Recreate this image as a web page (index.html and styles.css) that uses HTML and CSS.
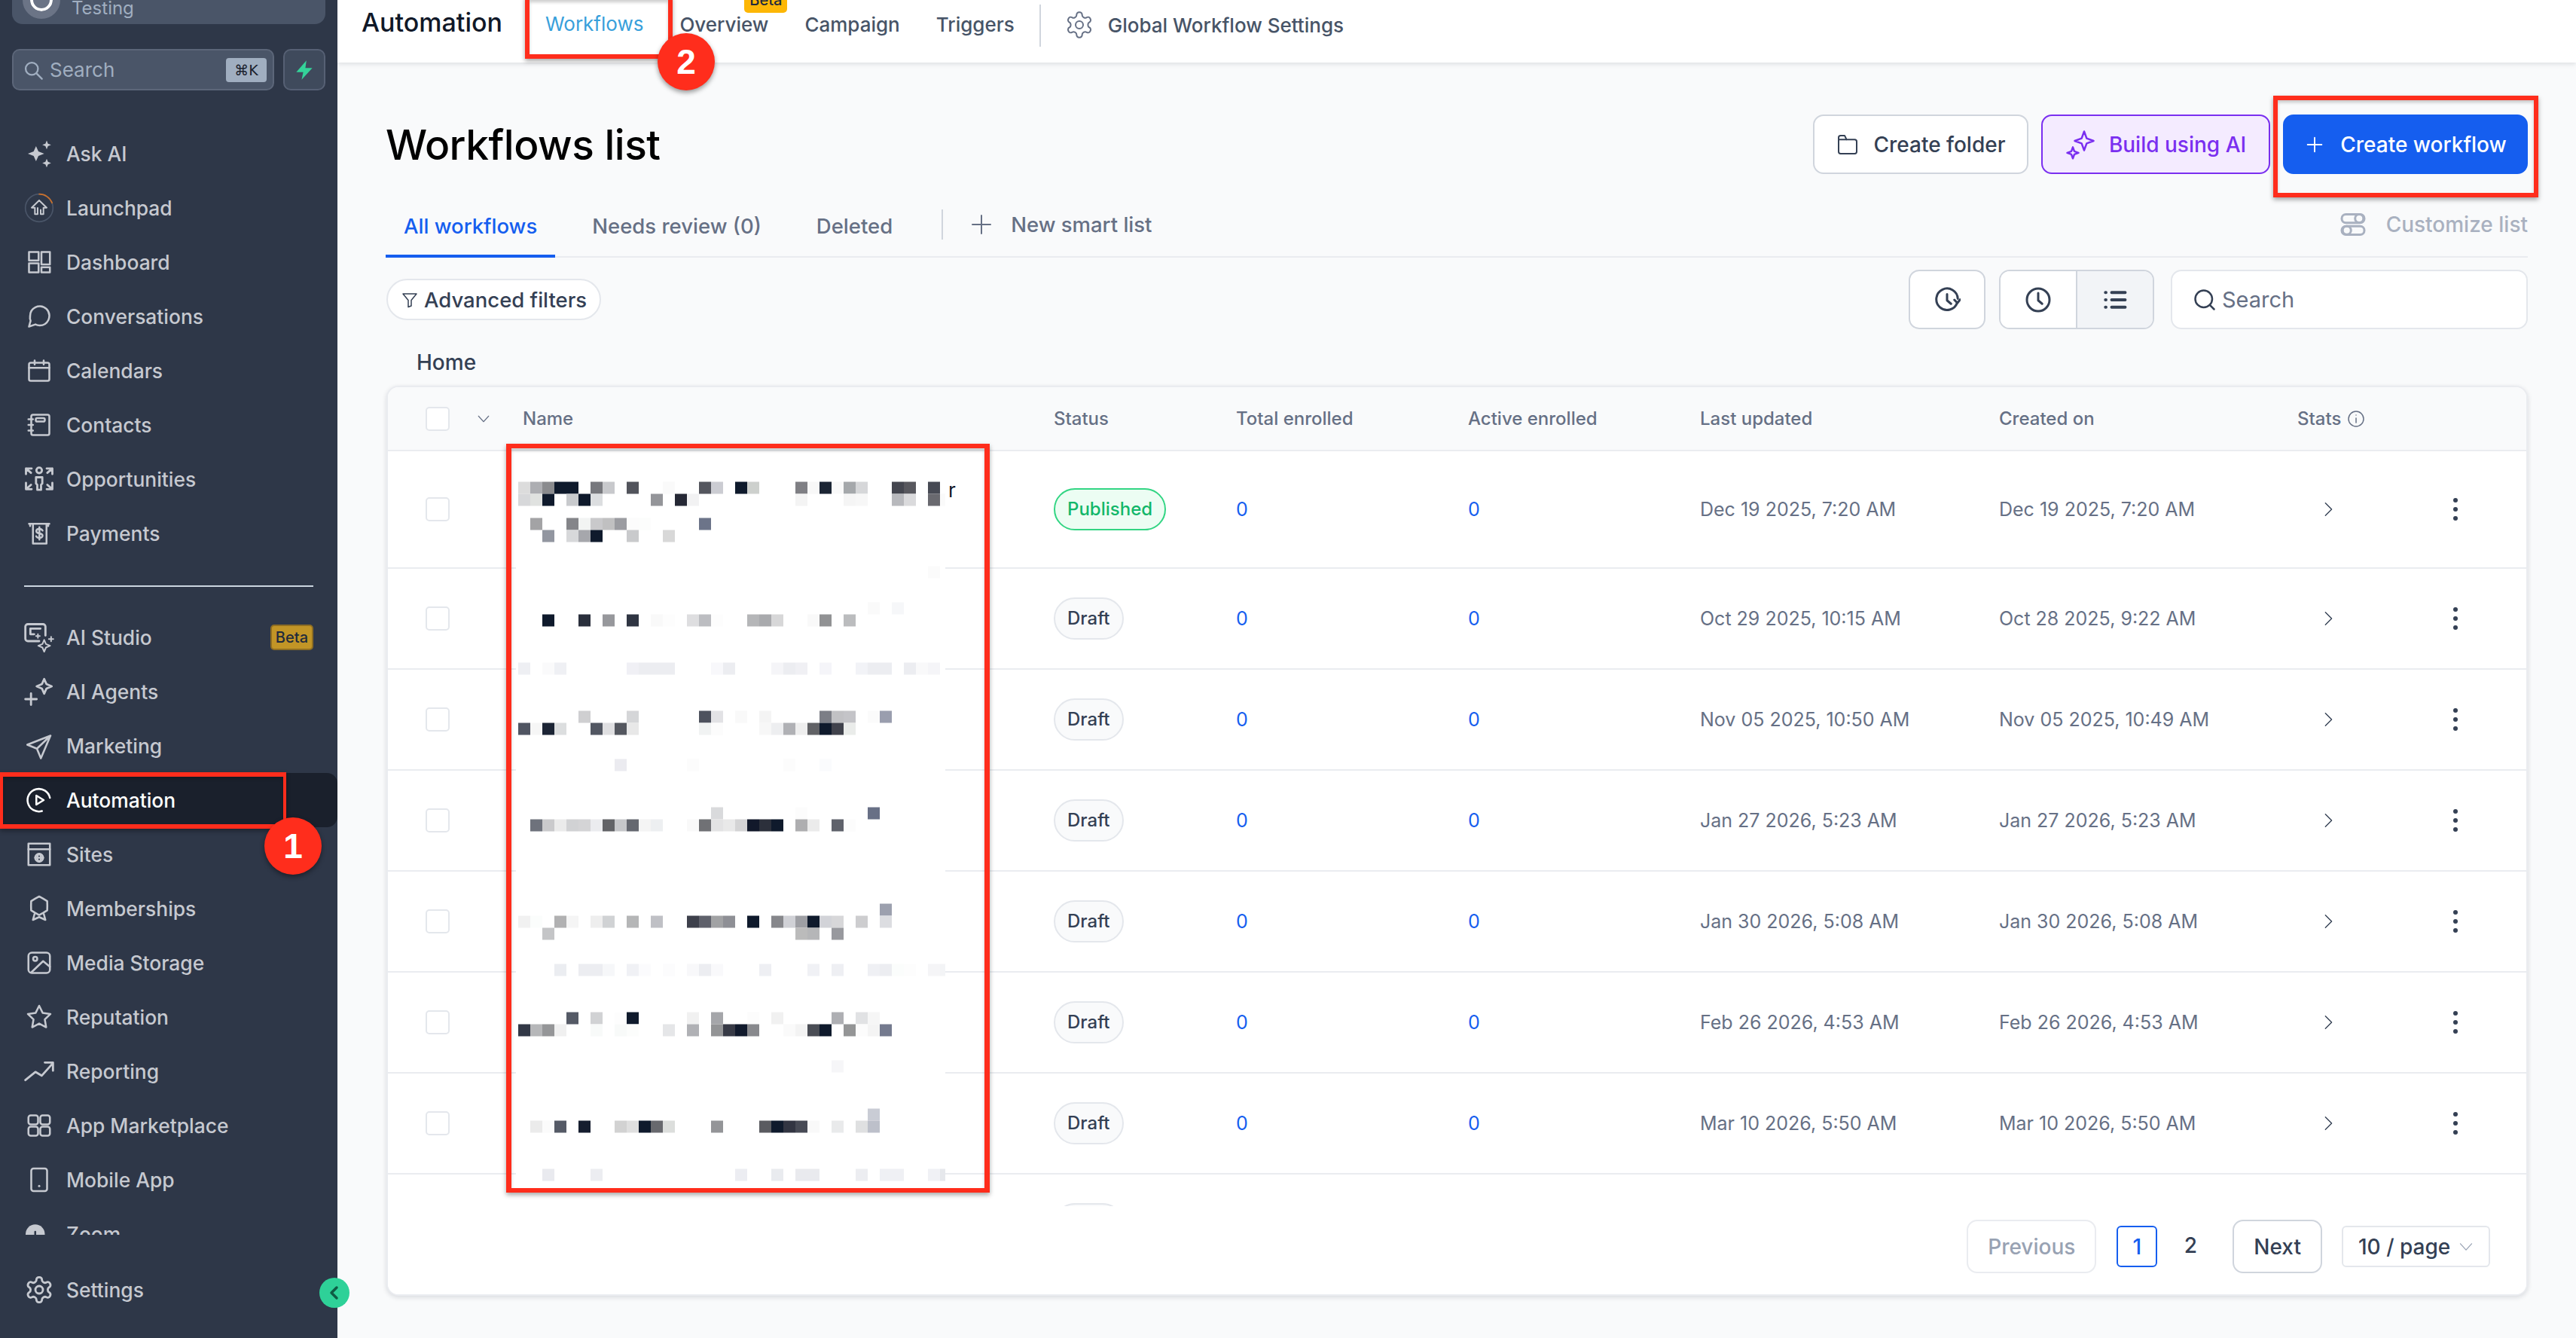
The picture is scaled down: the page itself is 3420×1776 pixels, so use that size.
FILE: index.html
```html
<!DOCTYPE html>
<html lang="en">
  <head>
    <meta charset="UTF-8" />
    <meta name="viewport" content="width=device-width, initial-scale=1.0" />
    <title>Workflows list</title>
    <link rel="stylesheet" href="styles.css">
  </head>
  <body>
    <div class="app">
      <aside class="sidebar">
        <div class="account">
          <span class="avatar"></span>
          <span class="account-name">Testing</span>
          <svg class="account-caret" viewBox="0 0 24 24"><path d="M6 -2l6 6 6-6" /></svg>
        </div>
        <div class="side-search-row">
          <div class="side-search">
            <svg class="icon-sm" viewBox="0 0 24 24"><circle cx="10.5" cy="10.5" r="7" /><path d="M16 16l6 6" /></svg>
            <span class="side-search-text">Search</span>
            <span class="kbd">⌘K</span>
          </div>
          <div class="bolt-btn">
            <svg viewBox="0 0 24 24"><path class="fill-green" d="M14 3L4.5 14H11l-1.5 7L19.5 10H13z" /></svg>
          </div>
        </div>
        <nav class="nav">
          <a class="nav-item"><svg class="icon icon-lg" viewBox="0 0 24 24"><path class="fill" d="M9.5 6l1.9 4.2 4.6 1.8-4.6 1.8L9.5 18l-1.9-4.2L3 12l4.6-1.8zM18 1.5l1 2.5 2.5 1-2.5 1-1 2.5-1-2.5-2.5-1 2.5-1zM18 16l1 2.5 2.5 1-2.5 1-1 2.5-1-2.5-2.5-1 2.5-1z" /></svg>Ask AI</a>
          <a class="nav-item"><svg class="icon icon-lg" viewBox="0 0 24 24"><circle class="ring" cx="12" cy="12" r="11" /><path class="ring-arc" d="M12 1a11 11 0 0 1 10.3 7" /><path class="thin" d="M12 6l6 5.8h-2.6V17h-2.2v-3.5M12 6l-6 5.8h2.6V17h2.2v-5" /></svg>Launchpad</a>
          <a class="nav-item"><svg class="icon" viewBox="0 0 24 24"><rect x="3" y="3" width="8.5" height="7.5" /><rect x="3" y="13" width="8.5" height="8" /><rect x="14" y="3" width="7.5" height="11" /><rect x="14" y="16.5" width="7.5" height="4.5" /></svg>Dashboard</a>
          <a class="nav-item"><svg class="icon" viewBox="0 0 24 24"><path d="M21 11.5a8.38 8.38 0 0 1-.9 3.8 8.5 8.5 0 0 1-7.6 4.7 8.38 8.38 0 0 1-3.8-.9L3 21l1.4-5.1a8.38 8.38 0 0 1-.4-4.4 8.5 8.5 0 0 1 4.7-7.6 8.38 8.38 0 0 1 3.8-.9h.5a8.48 8.48 0 0 1 8 8v.5z" /></svg>Conversations</a>
          <a class="nav-item"><svg class="icon" viewBox="0 0 24 24"><rect x="3" y="5" width="18" height="16" rx="1.5" /><path d="M3 9.5h18M8 3v3.5M16 3v3.5" /></svg>Calendars</a>
          <a class="nav-item"><svg class="icon" viewBox="0 0 24 24"><rect x="5" y="3" width="16" height="18" rx="1.5" /><rect x="9" y="6" width="8" height="3" rx="1.2" /><path d="M2.5 7h4M2.5 12h4M2.5 17h4" /></svg>Contacts</a>
          <a class="nav-item"><svg class="icon icon-lg" viewBox="0 0 24 24"><circle cx="12" cy="5" r="2.2" /><path d="M9.5 10.5h5v5l-1 1v4h-3v-4l-1-1zM1.5 8V3.5H6M1.5 3.5L5.5 7M22.5 8V3.5H18M22.5 3.5L18.5 7M1.500 15v5h4.500M1.500 20l4-3.500M22.500 15v5H18M22.500 20l-4-3.500" /></svg>Opportunities</a>
          <a class="nav-item"><svg class="icon" viewBox="0 0 24 24"><path d="M3 3.5h18M4 3.5v2M20 3.5v2M6.5 3.5V21h12V3.5M15 9.5c-.5-1-1.6-1.5-2.8-1.5-1.500 0-2.700.8-2.700 2s1.200 1.800 2.700 2 2.800.8 2.800 2-1.300 2-2.800 2c-1.200 0-2.300-.5-2.800-1.500M12.200 6.500v11" /></svg>Payments</a>
          <div class="nav-divider"></div>
          <a class="nav-item"><svg class="icon icon-lg" viewBox="0 0 24 24"><path d="M12 15H3a2 2 0 0 1-2-2V3.500a2 2 0 0 1 2-2h12a2 2 0 0 1 2 2v7M5 9.500V5h8M5 9.500h3" /><path class="thin" d="M16 14l1.400 3.300 3.300 1.400-3.300 1.400-1.400 3.300-1.400-3.300-3.300-1.400 3.300-1.400zM21.500 11.500v3.600M19.700 13.300h3.600M11 9.500v3M9.500 11h3" /></svg>AI Studio<span class="side-beta">Beta</span></a>
          <a class="nav-item"><svg class="icon icon-lg" viewBox="0 0 24 24"><path d="M1 18h9M5.500 13.500v9M16 2l1.800 4 4.200 1.800-4.200 1.800-1.800 4-1.800-4-4.200-1.800 4.200-1.800z" /></svg>AI Agents</a>
          <a class="nav-item"><svg class="icon" viewBox="0 0 24 24"><path d="M22 3L1.500 11l8.500 3.500L13.500 23zM22 3L10 14.500" /></svg>Marketing</a>
          <a class="nav-item active"><svg class="icon" viewBox="0 0 24 24"><path d="M21.500 10A10 10 0 1 0 14.500 21.700" /><path d="M9.500 8l6.500 4-6.500 4z" /></svg>Automation</a>
          <a class="nav-item"><svg class="icon" viewBox="0 0 24 24"><rect x="2.500" y="2.500" width="19" height="19" /><path d="M2.500 7.500h19M8.500 15h7M12 11.500c-2.500 2-2.500 5 0 7M12 11.500c2.500 2 2.500 5 0 7" /><circle cx="12" cy="15" r="3.500" /></svg>Sites</a>
          <a class="nav-item"><svg class="icon" viewBox="0 0 24 24"><path d="M12 1.300l3.600 2 3.500 2.100.1 4.100-.1 4.100-3.500 2.100-3.600 2-3.600-2-3.500-2.100-.1-4.100.1-4.100 3.500-2.100zM8 16.500L6.500 22l5.500-2.500 5.500 2.500-1.500-5.500" /></svg>Memberships</a>
          <a class="nav-item"><svg class="icon" viewBox="0 0 24 24"><rect x="2.500" y="3" width="19" height="18" rx="3" /><circle cx="8.500" cy="8.500" r="1.800" /><path d="M5 20.500L15.500 10.500l6 5" /></svg>Media Storage</a>
          <a class="nav-item"><svg class="icon" viewBox="0 0 24 24"><path d="M12 2l3.090 6.260L22 9.270l-5 4.870 1.180 6.880L12 17.770l-6.180 3.250L7 14.140 2 9.270l6.910-1.010z" /></svg>Reputation</a>
          <a class="nav-item"><svg class="icon icon-lg" viewBox="0 0 24 24"><path d="M1 19l8-6.500 5 3L23 5.500M16.500 5H23v6.500" /></svg>Reporting</a>
          <a class="nav-item"><svg class="icon" viewBox="0 0 24 24"><rect x="2.500" y="3" width="8.500" height="8" rx="2" /><rect x="13" y="3" width="8.500" height="8" rx="2" /><rect x="2.500" y="13" width="8.500" height="8" rx="2" /><rect x="13" y="13" width="8.500" height="8" rx="2" /></svg>App Marketplace</a>
          <a class="nav-item"><svg class="icon" viewBox="0 0 24 24"><rect x="5" y="2" width="14" height="20" rx="2" /><circle class="fill" cx="12" cy="17.500" r="1" /></svg>Mobile App</a>
          <a class="nav-item"><svg class="icon icon-zoom" viewBox="0 0 24 24"><circle class="fill" cx="8.500" cy="12" r="8.500" /><path class="dark" d="M4 14h9M8.500 10v8" /></svg>Zoom</a>
        </nav>
        <a class="nav-item settings"><svg class="icon icon-lg" viewBox="0 0 24 24"><path d="M12.220 2h-.44a2 2 0 0 0-2 2v.18a2 2 0 0 1-1 1.730l-.43.25a2 2 0 0 1-2 0l-.15-.08a2 2 0 0 0-2.730.73l-.22.38a2 2 0 0 0 .73 2.730l.15.1a2 2 0 0 1 1 1.720v.51a2 2 0 0 1-1 1.740l-.15.09a2 2 0 0 0-.73 2.730l.22.38a2 2 0 0 0 2.730.73l.15-.08a2 2 0 0 1 2 0l.43.25a2 2 0 0 1 1 1.730V20a2 2 0 0 0 2 2h.44a2 2 0 0 0 2-2v-.18a2 2 0 0 1 1-1.730l.43-.25a2 2 0 0 1 2 0l.15.08a2 2 0 0 0 2.730-.73l.22-.39a2 2 0 0 0-.73-2.730l-.15-.08a2 2 0 0 1-1-1.740v-.5a2 2 0 0 1 1-1.740l.15-.09a2 2 0 0 0 .73-2.730l-.22-.38a2 2 0 0 0-2.730-.73l-.15.08a2 2 0 0 1-2 0l-.43-.25a2 2 0 0 1-1-1.730V4a2 2 0 0 0-2-2z" /><circle cx="12" cy="12" r="3" /></svg>Settings</a>
        <div class="collapse-btn">
          <svg viewBox="0 0 24 24"><path d="M15 5l-7 7 7 7" /></svg>
        </div>
      </aside>

      <main class="main">
        <header class="topbar">
          <span class="top-title">Automation</span>
          <a class="top-link current">Workflows</a>
          <a class="top-link">Overview<span class="top-beta">Beta</span></a>
          <a class="top-link">Campaign</a>
          <a class="top-link">Triggers</a>
          <span class="top-sep"></span>
          <a class="top-settings">
            <svg viewBox="0 0 24 24"><path d="M12.220 2h-.44a2 2 0 0 0-2 2v.18a2 2 0 0 1-1 1.730l-.43.25a2 2 0 0 1-2 0l-.15-.08a2 2 0 0 0-2.730.73l-.22.38a2 2 0 0 0 .73 2.730l.15.1a2 2 0 0 1 1 1.720v.51a2 2 0 0 1-1 1.740l-.15.09a2 2 0 0 0-.73 2.730l.22.38a2 2 0 0 0 2.730.73l.15-.08a2 2 0 0 1 2 0l.43.25a2 2 0 0 1 1 1.730V20a2 2 0 0 0 2 2h.44a2 2 0 0 0 2-2v-.18a2 2 0 0 1 1-1.730l.43-.25a2 2 0 0 1 2 0l.15.08a2 2 0 0 0 2.730-.73l.22-.39a2 2 0 0 0-.73-2.730l-.15-.08a2 2 0 0 1-1-1.740v-.5a2 2 0 0 1 1-1.740l.15-.09a2 2 0 0 0 .73-2.730l-.22-.38a2 2 0 0 0-2.730-.73l-.15.08a2 2 0 0 1-2 0l-.43-.25a2 2 0 0 1-1-1.730V4a2 2 0 0 0-2-2z" /><circle cx="12" cy="12" r="3" /></svg>
            Global Workflow Settings
          </a>
        </header>

        <section class="page">
          <div class="page-head">
            <h1>Workflows list</h1>
            <div class="head-actions">
              <button class="btn btn-plain">
                <svg viewBox="0 0 24 24"><path d="M3 7V19a2 2 0 0 0 2 2h14a2 2 0 0 0 2-2V9a2 2 0 0 0-2-2H3zM3 7V5a2 2 0 0 1 2-2h4l2 4" /></svg>
                Create folder
              </button>
              <button class="btn btn-ai">
                <svg viewBox="0 0 24 24"><path d="M15 1.500l2 5.500 5.500 2-5.500 2-2 5.500-2-5.500-5.500-2 5.500-2zM6 14l1.200 3.300 3.300 1.200-3.300 1.200L6 23l-1.200-3.300-3.300-1.200 3.300-1.200z" /></svg>
                Build using AI
              </button>
              <button class="btn btn-primary">
                <svg viewBox="0 0 24 24"><path d="M12 4v16M4 12h16" /></svg>
                Create workflow
              </button>
            </div>
          </div>

          <div class="tabs">
            <a class="tab active">All workflows</a>
            <a class="tab">Needs review (0)</a>
            <a class="tab">Deleted</a>
            <span class="tab-sep"></span>
            <a class="new-list">
              <svg viewBox="0 0 24 24"><path d="M12 3v18M3 12h18" /></svg>
              New smart list
            </a>
            <a class="customize">
              <svg viewBox="0 0 24 24"><rect x="2" y="3" width="20" height="7.500" rx="3.700" /><circle cx="17.500" cy="6.700" r="3.700" /><rect x="2" y="13.500" width="20" height="7.500" rx="3.700" /><circle cx="6.500" cy="17.200" r="3.700" /></svg>
              Customize list
            </a>
          </div>

          <div class="toolbar">
            <button class="pill-filter">
              <svg viewBox="0 0 24 24"><path d="M3 4h18l-7 8.500V20l-4 1.500v-9z" /></svg>
              Advanced filters
            </button>
            <div class="toolbar-right">
              <button class="tool-btn">
                <svg viewBox="0 0 24 24"><path d="M21 14.500A9.500 9.500 0 1 1 21.500 11" /><path d="M18.500 12l2.700 2.800 2.300-3M12 7v5.500l3.500 3" /></svg>
              </button>
              <div class="tool-group">
                <button class="tool-btn-inner">
                  <svg viewBox="0 0 24 24"><circle cx="12" cy="12" r="10" /><path d="M12 6v6.500l3.500 3" /></svg>
                </button>
                <button class="tool-btn-inner selected">
                  <svg class="list-icon" viewBox="0 0 24 24"><path d="M9 5.500h12M9 12h12M9 18.500h12M3.500 5.500h.5M3.500 12h.5M3.500 18.500h.5" /></svg>
                </button>
              </div>
              <div class="search-box">
                <svg viewBox="0 0 24 24"><circle cx="11" cy="11" r="9" /><path d="M17.500 17.500L22 22" /></svg>
                Search
              </div>
            </div>
          </div>

          <div class="crumb">Home</div>

          <div class="card">
            <div class="table-head">
              <div class="cell-check"><span class="checkbox"></span><svg class="head-caret" viewBox="0 0 24 24"><path d="M3 7l9 10 9-10" /></svg></div>
              <div>Name</div>
              <div>Status</div>
              <div>Total enrolled</div>
              <div>Active enrolled</div>
              <div>Last updated</div>
              <div>Created on</div>
              <div class="stats-head">Stats<svg viewBox="0 0 24 24"><circle cx="12" cy="12" r="10" /><path d="M12 11v6M12 7h.01" /></svg></div>
              <div></div>
            </div>
            <div class="table-body"></div>
            <div class="table-foot">
              <button class="page-btn disabled">Previous</button>
              <span class="page-num current">1</span>
              <span class="page-num">2</span>
              <button class="page-btn">Next</button>
              <div class="page-size">10 / page<svg viewBox="0 0 24 24"><path d="M3 7l9 10 9-10" /></svg></div>
            </div>
          </div>
        </section>
      </main>

      <svg class="mosaic" viewBox="0 0 570 986"></svg>

      <div class="mark mark-nav"></div>
      <div class="mark mark-tab"></div>
      <div class="mark mark-create"></div>
      <div class="mark mark-names"></div>
      <div class="step step-one">1</div>
      <div class="step step-two">2</div>
    </div>
    <script src="script.js"></script>
  </body>
</html>
```

FILE: styles.css
```css
* {
  box-sizing: border-box;
}
html,
body {
  margin: 0;
  height: 100%;
  overflow: hidden;
}
body {
  font-family: Inter, "Noto Sans", sans-serif;
  background-color: #f9fafb;
}
button {
  font-family: inherit;
  cursor: pointer;
}
svg {
  fill: none;
  stroke: currentColor;
  stroke-width: 1.5;
  stroke-linecap: round;
  stroke-linejoin: round;
}
.app {
  position: relative;
  display: flex;
  width: 3420px;
  height: 1776px;
  overflow: hidden;
}

/* sidebar */
.sidebar {
  position: relative;
  display: flex;
  flex-direction: column;
  flex: none;
  width: 448px;
  background-color: #2e3748;
  color: #c6c9d0;
}
.account {
  display: flex;
  align-items: center;
  height: 32px;
  margin: 0 16px;
  padding: 0 14px;
  background-color: #4a5568;
  border-radius: 0 0 14px 14px;
  color: #a0aec0;
  font-size: 24px;
  overflow: hidden;
}
.avatar {
  flex: none;
  width: 50px;
  height: 50px;
  margin-top: -32px;
  border-radius: 50%;
  background-color: #6b7486;
  border: 10px solid #6b7486;
  box-shadow: inset 0 0 0 4px #fff;
}
.account-name {
  margin-left: 15px;
  margin-top: -12px;
}
.account-caret {
  width: 28px;
  height: 28px;
  margin-left: auto;
  margin-top: -24px;
  color: #e2e8f0;
  stroke-width: 2;
  overflow: visible;
}
.side-search-row {
  display: flex;
  gap: 12px;
  margin: 33px 16px 0;
}
.side-search {
  display: flex;
  align-items: center;
  flex: 1;
  height: 55px;
  padding: 0 8px 0 12px;
  background-color: #4a5568;
  border: 2px solid #5c6679;
  border-radius: 10px;
  color: #a0aec0;
  font-size: 26px;
}
.icon-sm {
  width: 28px;
  height: 28px;
  margin-right: 8px;
  stroke-width: 2;
}
.side-search-text {
  flex: 1;
}
.kbd {
  padding: 2px 8px;
  width: 54px;
  height: 32px;
  background-color: #a0aec0;
  border-radius: 4px;
  color: #1a202c;
  font-family: "DejaVu Sans", sans-serif;
  font-size: 19px;
  line-height: 28px;
  text-align: center;
  white-space: nowrap;
}
.bolt-btn {
  display: flex;
  align-items: center;
  justify-content: center;
  width: 56px;
  height: 55px;
  background-color: #3f4a5c;
  border: 2px solid #566074;
  border-radius: 10px;
}
.bolt-btn svg {
  width: 34px;
  height: 34px;
  stroke: none;
}
.fill-green {
  fill: #34d399;
}
.nav {
  height: 1471px;
  margin-top: 48px;
  flex: none;
  overflow: hidden;
}
.nav-item {
  display: flex;
  align-items: center;
  height: 72px;
  padding-left: 34px;
  gap: 18px;
  font-size: 26.4px;
  font-weight: 500;
  color: #c6c9d0;
  white-space: nowrap;
}
.nav-item.active {
  background-color: #1a202c;
  color: #fff;
  border-radius: 0 14px 14px 0;
}
.nav-item.settings {
  margin-top: 37px;
}
.icon {
  flex: none;
  width: 36px;
  height: 36px;
  stroke-width: 1.7;
}
.icon-lg {
  width: 40px;
  height: 40px;
  margin: 0 -2px;
}
.fill {
  fill: currentColor;
  stroke: none;
}
.dark {
  stroke: #2e3748;
}
.ring {
  stroke: #4a5568;
  stroke-width: 1;
}
.ring-arc {
  stroke: #c8702c;
  stroke-width: 1;
}
.thin {
  stroke-width: 1.2;
}
.nav-divider {
  height: 2px;
  margin: 33px 32px 31px;
  background-color: #cbd5e0;
}
.side-beta {
  margin-left: auto;
  margin-right: 32px;
  padding: 0 5px;
  height: 34px;
  line-height: 30px;
  background-color: #c29526;
  border: 2px solid #8f6e22;
  border-radius: 5px;
  color: #1f2a3d;
  font-size: 20px;
}
.collapse-btn {
  position: absolute;
  left: 424px;
  top: 1696px;
  display: flex;
  align-items: center;
  justify-content: center;
  width: 40px;
  height: 40px;
  border-radius: 50%;
  background-color: #2ed198;
  color: #0f5b44;
}
.collapse-btn svg {
  width: 24px;
  height: 24px;
  stroke-width: 3.5;
}

/* top bar */
.main {
  flex: 1;
  min-width: 0;
}
.topbar {
  display: flex;
  align-items: flex-start;
  height: 83px;
  padding: 10px 0 0 32px;
  background-color: #fff;
  box-shadow: 0 2px 6px rgba(16, 24, 40, 0.12);
}
.top-title {
  width: 244px;
  height: 44px;
  font-size: 34px;
  line-height: 40px;
  font-weight: 500;
  color: #101828;
}
.top-link {
  position: relative;
  margin-right: 48px;
  font-size: 26px;
  line-height: 46px;
  font-weight: 500;
  color: #475467;
}
.top-link.current {
  font-weight: 400;
  line-height: 44px;
  color: #38a0db;
}
.top-beta {
  position: absolute;
  left: 86px;
  top: -24px;
  width: 57px;
  height: 31px;
  background-color: #fdb706;
  border-radius: 0 0 5px 5px;
  color: #1f2a3d;
  font-size: 20px;
  line-height: 28px;
  text-align: center;
}
.top-sep {
  width: 2px;
  height: 56px;
  margin: -4px 0 0 -15px;
  background-color: #d0d5dd;
}
.top-settings {
  display: flex;
  align-items: center;
  gap: 18px;
  height: 46px;
  margin-left: 31px;
  font-size: 26px;
  font-weight: 500;
  color: #475467;
}
.top-settings svg {
  width: 40px;
  height: 40px;
  color: #667085;
  stroke-width: 1.2;
}

/* page */
.page {
  padding: 69px 64px 0;
}
.page-head {
  display: flex;
  align-items: flex-start;
  justify-content: space-between;
  height: 79px;
}
h1 {
  margin: 0;
  font-size: 55px;
  line-height: 81px;
  font-weight: 500;
  letter-spacing: -0.5px;
  color: #000;
}
.head-actions {
  display: flex;
  gap: 17px;
}
.btn {
  display: flex;
  align-items: center;
  justify-content: center;
  gap: 18px;
  height: 79px;
  padding: 0;
  border-radius: 14px;
  font-size: 28px;
  font-weight: 500;
}
.btn svg {
  width: 32px;
  height: 32px;
}
.btn-plain {
  width: 286px;
  background-color: #fff;
  border: 2px solid #d0d5dd;
  color: #344054;
}
.btn-ai {
  width: 304px;
  background-color: #f4ebff;
  border: 2px solid #7a2ff0;
  color: #7a2ff0;
}
.btn-ai svg {
  width: 40px;
  height: 40px;
}
.btn-primary {
  gap: 20px;
  width: 325px;
  background-color: #155eef;
  border: 2px solid #155eef;
  color: #fff;
}
.btn-primary svg {
  width: 28px;
  height: 28px;
  stroke-width: 1.6;
}
.tabs {
  display: flex;
  align-items: center;
  height: 72px;
  margin-top: 39px;
  border-bottom: 2px solid #eaecf0;
  font-size: 27.5px;
  font-weight: 500;
  color: #667085;
}
.tab {
  display: flex;
  align-items: center;
  height: 72px;
  padding: 0 24px 8px;
  margin-right: 25px;
  margin-top: 2px;
  border-bottom: 4px solid transparent;
  white-space: nowrap;
}
.tab.active {
  color: #155eef;
  border-bottom-color: #155eef;
}
.tab-sep {
  width: 2px;
  height: 40px;
  margin: -14px 0 0 16px;
  background-color: #d0d5dd;
}
.new-list {
  display: flex;
  align-items: center;
  gap: 23px;
  margin: -15px 0 0 35px;
}
.new-list svg {
  width: 32px;
  height: 32px;
}
.customize {
  display: flex;
  align-items: center;
  gap: 26px;
  margin: -15px 0 0 auto;
  font-size: 28px;
  color: #a9b1c0;
}
.customize svg {
  width: 36px;
  height: 36px;
  stroke-width: 2;
}
.toolbar {
  display: flex;
  align-items: center;
  justify-content: space-between;
  height: 79px;
  margin-top: 16px;
}
.pill-filter {
  display: flex;
  align-items: center;
  gap: 7px;
  height: 55px;
  padding: 0 17px;
  margin-left: 1px;
  background-color: #fff;
  border: 2px solid #e4e7ec;
  border-radius: 28px;
  font-size: 27.5px;
  font-weight: 500;
  color: #344054;
}
.pill-filter svg {
  width: 24px;
  height: 24px;
}
.toolbar-right {
  display: flex;
  align-items: center;
}
.tool-btn {
  display: flex;
  align-items: center;
  justify-content: center;
  width: 102px;
  height: 79px;
  margin-right: 18px;
  padding: 0;
  background-color: #fff;
  border: 2px solid #d0d5dd;
  border-radius: 14px;
  color: #344054;
}
.tool-btn svg,
.tool-btn-inner svg {
  width: 36px;
  height: 36px;
  stroke-width: 2;
}
.tool-btn-inner svg.list-icon {
  stroke-width: 2.6;
}
.tool-group {
  display: flex;
  width: 206px;
  height: 79px;
  margin-right: 22px;
  background-color: #fff;
  border: 2px solid #d0d5dd;
  border-radius: 14px;
  overflow: hidden;
}
.tool-btn-inner {
  display: flex;
  align-items: center;
  justify-content: center;
  flex: 1;
  padding: 0;
  background-color: #fff;
  border: 0;
  color: #344054;
}
.tool-btn-inner.selected {
  background-color: #f2f4f7;
  border-left: 2px solid #d0d5dd;
}
.search-box {
  display: flex;
  align-items: center;
  gap: 8px;
  width: 474px;
  height: 79px;
  padding-left: 28px;
  background-color: #fff;
  border: 2px solid #e4e7ec;
  border-radius: 14px;
  font-size: 29px;
  color: #667085;
}
.search-box svg {
  width: 30px;
  height: 30px;
  color: #344054;
  stroke-width: 2;
}
.crumb {
  height: 75px;
  padding: 22px 0 0 41px;
  font-size: 28px;
  line-height: 44px;
  font-weight: 500;
  color: #344054;
}

/* table */
.card {
  display: flex;
  flex-direction: column;
  height: 1208px;
  margin-left: 1px;
  background-color: #fff;
  border: 2px solid #eaecf0;
  border-radius: 16px;
  box-shadow: 0 2px 6px rgba(16, 24, 40, 0.14);
  overflow: hidden;
}
.table-head,
.table-row {
  display: grid;
  grid-template-columns: 179px 705px 242px 308px 308px 397px 396px 190px 40px;
  align-items: center;
  border-bottom: 2px solid #eaecf0;
  font-size: 25px;
  color: #667085;
}
.table-head {
  flex: none;
  height: 85px;
  background-color: #f9fafb;
  font-size: 24px;
  font-weight: 500;
}
.table-row {
  height: 134px;
}
.table-row.tall {
  height: 156px;
}
.cell-check {
  display: flex;
  align-items: center;
  padding-left: 50px;
}
.checkbox {
  flex: none;
  width: 32px;
  height: 32px;
  background-color: #fff;
  border: 2px solid #e4e7ec;
  border-radius: 5px;
}
.head-caret {
  width: 18px;
  height: 18px;
  margin-left: 36px;
}
.stats-head {
  display: flex;
  align-items: center;
  gap: 8px;
}
.stats-head svg {
  width: 24px;
  height: 24px;
}
.table-body {
  flex: none;
  height: 1002px;
  overflow: hidden;
}
.name-tail {
  padding-left: 565px;
  margin-top: -52px;
  font-size: 26px;
  color: #101828;
}
.status {
  display: inline-block;
  height: 56px;
  padding: 0 16px;
  border-radius: 28px;
  font-size: 24px;
  line-height: 52px;
  font-weight: 500;
}
.status.draft {
  background-color: #f9fafb;
  border: 2px solid #e4e7ec;
  color: #344054;
}
.status.published {
  background-color: #ecfdf3;
  border: 2px solid #32d583;
  color: #12b76a;
}
.count {
  color: #155eef;
}
.row-arrow {
  width: 22px;
  height: 22px;
  margin-left: 30px;
  color: #344054;
  display: block;
}
.row-menu {
  display: flex;
  flex-direction: column;
  align-items: center;
  gap: 6px;
}
.row-menu span {
  width: 6px;
  height: 6px;
  border-radius: 50%;
  background-color: #344054;
}
.table-foot {
  display: flex;
  flex: 1;
  align-items: flex-start;
  justify-content: flex-end;
  padding: 18px 48px 0 0;
  background-color: #fff;
  font-size: 28px;
  font-weight: 500;
  color: #344054;
}
.page-btn {
  height: 71px;
  padding: 0 26px;
  background-color: #fff;
  border: 2px solid #d0d5dd;
  border-radius: 14px;
  font-size: 28px;
  font-weight: 500;
  color: #344054;
}
.page-btn.disabled {
  border-color: #eaecf0;
  color: #98a2b3;
}
.page-num {
  width: 54px;
  height: 55px;
  margin: 8px 17px 0 27px;
  line-height: 53px;
  text-align: center;
}
.page-num + .page-num {
  margin: 8px 29px 0 0;
}
.page-num.current {
  border: 2px solid #155eef;
  border-radius: 6px;
  color: #155eef;
}
.page-size {
  display: flex;
  align-items: center;
  justify-content: space-between;
  width: 197px;
  height: 55px;
  margin: 8px 0 0 26px;
  padding: 0 20px 0 20px;
  background-color: #fff;
  border: 2px solid #e4e7ec;
  border-radius: 6px;
  white-space: nowrap;
}
.page-size svg {
  width: 20px;
  height: 20px;
  color: #98a2b3;
}

/* redaction and annotations drawn on top of the screenshot */
.mosaic {
  position: absolute;
  left: 685px;
  top: 604px;
  width: 570px;
  height: 986px;
  background-color: #fff;
  stroke: none;
}
.mark {
  position: absolute;
  border-style: solid;
  border-color: #ff2d1c;
  box-shadow: 0 3px 6px rgba(0, 0, 0, 0.35), inset 0 3px 4px rgba(0, 0, 0, 0.2);
}
.mark-nav {
  left: 0;
  top: 1025px;
  width: 380px;
  height: 75px;
  border-width: 6px 4px;
}
.mark-tab {
  left: 697px;
  top: -6px;
  width: 196px;
  height: 84px;
  border-width: 6px;
}
.mark-create {
  left: 3018px;
  top: 127px;
  width: 352px;
  height: 135px;
  border-width: 6px;
}
.mark-names {
  left: 672px;
  top: 589px;
  width: 642px;
  height: 994px;
  border-width: 6px 7px;
}
.step {
  position: absolute;
  width: 76px;
  height: 76px;
  border-radius: 50%;
  background-color: #ff2d1c;
  box-shadow: 0 3px 6px rgba(0, 0, 0, 0.4);
  color: #fff;
  font-family: "Liberation Sans", Arial, sans-serif;
  font-size: 46px;
  font-weight: 700;
  line-height: 76px;
  text-align: center;
}
.step-one {
  left: 351px;
  top: 1085px;
}
.step-two {
  left: 873px;
  top: 44px;
}
```

FILE: script.js
```js
const rows = [
  { date1: "Dec 19 2025, 7:20 AM", date2: "Dec 19 2025, 7:20 AM", status: "Published", tall: true, tail: "r" },
  { date1: "Oct 29 2025, 10:15 AM", date2: "Oct 28 2025, 9:22 AM", status: "Draft" },
  { date1: "Nov 05 2025, 10:50 AM", date2: "Nov 05 2025, 10:49 AM", status: "Draft" },
  { date1: "Jan 27 2026, 5:23 AM", date2: "Jan 27 2026, 5:23 AM", status: "Draft" },
  { date1: "Jan 30 2026, 5:08 AM", date2: "Jan 30 2026, 5:08 AM", status: "Draft" },
  { date1: "Feb 26 2026, 4:53 AM", date2: "Feb 26 2026, 4:53 AM", status: "Draft" },
  { date1: "Mar 10 2026, 5:50 AM", date2: "Mar 10 2026, 5:50 AM", status: "Draft" },
  { date1: "", date2: "", status: "Draft" },
];

const body = document.querySelector(".table-body");
rows.forEach((row) => {
  body.innerHTML += `<div class="table-row ${row.tall ? "tall" : ""}">
    <div class="cell-check"><span class="checkbox"></span></div>
    <div class="name-tail">${row.tail || ""}</div>
    <div><span class="status ${row.status.toLowerCase()}">${row.status}</span></div>
    <div class="count">0</div>
    <div class="count">0</div>
    <div>${row.date1}</div>
    <div>${row.date2}</div>
    <div><svg class="row-arrow" viewBox="0 0 24 24"><path d="M8 3l9 9-9 9" /></svg></div>
    <div class="row-menu"><span></span><span></span><span></span></div>
  </div>`;
});

// pixelated workflow names: row of 16px cells -> [column, colour]
const cells = {
  0: [[0,"#dcdcdc"],[1,"#adaeb2"],[2,"#8a8b8e"],[3,"#0f1a2c"],[4,"#0f1a2c"],[6,"#77787d"],[7,"#c8c9cc"],[9,"#52545c"],[12,"#fafafa"],[15,"#54565e"],[16,"#cbccd2"],[18,"#0f1a2c"],[19,"#cdd0cd"],[23,"#7f7f84"],[24,"#f8f8f8"],[25,"#1b2534"],[26,"#f9f9f9"],[27,"#a5a8ab"],[28,"#d6d7d9"],[31,"#44464f"],[32,"#58585e"],[34,"#474a54"]],
  1: [[0,"#d7d8da"],[1,"#e0e2e0"],[2,"#0f1a2c"],[4,"#c8cacd"],[5,"#0f1a2c"],[6,"#dcdee0"],[11,"#949599"],[13,"#252835"],[14,"#f2f2f3"],[23,"#f4f4f4"],[27,"#f5f5f5"],[28,"#f7f7f7"],[31,"#b8b9bd"],[32,"#dadadc"],[34,"#69696f"],[35,"#fafafa"]],
  3: [[1,"#a3a3a5"],[4,"#848589"],[5,"#f2f4f3"],[6,"#c9c9cb"],[7,"#c0c0c1"],[8,"#9b9ca1"],[9,"#fcfcfc"],[10,"#fcfdfc"],[15,"#6c7489"]],
  4: [[2,"#9296a0"],[4,"#d7d8da"],[5,"#a6a7ac"],[6,"#0f1a2c"],[9,"#c9cacc"],[12,"#d8d8d8"]],
  7: [[34,"#fbfbfb"]],
  10: [[29,"#fafafa"],[31,"#f6f7f9"]],
  11: [[2,"#0f1a2c"],[5,"#2a2f3c"],[7,"#97989c"],[9,"#2f3542"],[11,"#f9f9f9"],[12,"#fdfdfd"],[14,"#dedee0"],[15,"#bcbdc1"],[16,"#fdfdfd"],[19,"#b5b6b8"],[20,"#a9aaad"],[21,"#d7d7d8"],[24,"#f9f9f9"],[25,"#919294"],[27,"#bbbcbe"]],
  15: [[0,"#eeeff3"],[2,"#fafafb"],[3,"#eff0f4"],[9,"#f0f0f5"],[10,"#ecedf1"],[11,"#ecedf1"],[12,"#ecedf1"],[16,"#f8f8fb"],[17,"#ecedf1"],[21,"#f5f5f8"],[22,"#ecedf1"],[23,"#f0f0f4"],[25,"#f5f5f9"],[28,"#f2f3f7"],[29,"#ecedf1"],[30,"#ecedf1"],[32,"#ecedf1"],[33,"#f9f9fa"],[34,"#f5f5f8"]],
  19: [[5,"#cfcfd1"],[9,"#d5d6d8"],[15,"#4e525e"],[16,"#e2e2e5"],[18,"#f9f9f9"],[20,"#f4f4f4"],[25,"#7c7e86"],[26,"#c1c1c4"],[27,"#c4c4c8"],[29,"#fbfbfb"],[30,"#9a9eae"]],
  20: [[0,"#505562"],[1,"#f6f6f6"],[2,"#1c2535"],[3,"#dcdedf"],[6,"#525762"],[7,"#dfdfe1"],[8,"#54575f"],[9,"#e8e8e8"],[15,"#f1f3f3"],[16,"#fcfcfc"],[20,"#f7f7f7"],[21,"#edeef0"],[22,"#b0b1b5"],[23,"#eeeeee"],[24,"#616266"],[25,"#0f1a2c"],[26,"#40424c"],[27,"#eaecea"]],
  23: [[8,"#ebebf0"],[14,"#fcfcfc"],[22,"#fcfcfc"],[25,"#fafbfd"]],
  27: [[16,"#d9dadc"],[23,"#fcfcfc"],[29,"#687086"]],
  28: [[1,"#6e727c"],[2,"#cacacc"],[3,"#ebebeb"],[4,"#d1d2d4"],[5,"#d4d4d6"],[6,"#ebecef"],[7,"#626367"],[8,"#c6c7ca"],[9,"#656870"],[10,"#f4f4f4"],[11,"#edeff1"],[14,"#f9f9f9"],[15,"#707175"],[16,"#e3e3e4"],[17,"#e9e9e9"],[18,"#d4d4d5"],[19,"#12192b"],[20,"#2c303b"],[21,"#0f1a2c"],[23,"#aeaeb0"],[24,"#ebebeb"],[26,"#5f626b"],[27,"#fcfcfc"]],
  35: [[30,"#9ca0ae"]],
  36: [[0,"#f1f1f1"],[1,"#fbfdfc"],[3,"#b1b1b2"],[4,"#f5f5f5"],[6,"#eeeeee"],[7,"#d0d2d4"],[9,"#b5b6b7"],[11,"#bfc0c5"],[14,"#3d404b"],[15,"#5f616b"],[16,"#a1a2a4"],[17,"#8e8f95"],[19,"#0f1a2c"],[21,"#86878b"],[22,"#d0d1d6"],[23,"#9e9fa4"],[24,"#0f1a2c"],[25,"#d2d3d8"],[26,"#d7d7d9"],[28,"#cdcdcf"],[30,"#dcdde1"]],
  37: [[2,"#c4c5c7"],[23,"#bbbbbb"],[24,"#b5b6b8"],[26,"#98999e"]],
  40: [[3,"#ebedf1"],[5,"#ecedf1"],[6,"#ecedf1"],[7,"#f6f7f9"],[9,"#f0f1f5"],[10,"#fbfbfd"],[12,"#fcfcfd"],[14,"#f8f8fa"],[15,"#ecedf1"],[16,"#f9f9fb"],[20,"#eeeff3"],[24,"#f0f1f5"],[26,"#eeeff3"],[29,"#eff0f4"],[30,"#ecedf1"],[31,"#fbfdfc"],[32,"#fdfdfd"],[34,"#f5f5f7"],[35,"#f3f4f6"]],
  44: [[4,"#555a66"],[6,"#d1d2d4"],[8,"#fdfdfd"],[9,"#0f1a2c"],[14,"#f1f1f1"],[16,"#a5a6aa"],[19,"#fcfcfc"],[21,"#f1f1f1"],[26,"#aeafb3"],[28,"#e1e2e4"],[29,"#f6f6f6"]],
  45: [[0,"#323846"],[1,"#b6b7b9"],[2,"#959698"],[3,"#f0f0f0"],[6,"#f8faf9"],[8,"#f8faf9"],[9,"#fcfdfc"],[12,"#e5e6e8"],[14,"#b0b1b5"],[16,"#939496"],[17,"#373a46"],[18,"#111a2c"],[19,"#88898d"],[22,"#fafafa"],[23,"#f3f3f3"],[24,"#4a4d55"],[25,"#0f1a2c"],[27,"#949596"],[28,"#fcfcfc"],[29,"#f4f4f4"],[30,"#747a8e"]],
  48: [[26,"#f6f6f8"]],
  52: [[29,"#c9ccd5"]],
  53: [[1,"#ebebeb"],[2,"#fbfbfb"],[3,"#555a66"],[5,"#161e2f"],[8,"#d2d2d2"],[9,"#dfdfdf"],[10,"#0f1a2c"],[11,"#68696e"],[12,"#dcdedc"],[16,"#949598"],[20,"#5a5b60"],[21,"#0f1a2c"],[22,"#323542"],[23,"#474a55"],[24,"#f9f9f9"],[26,"#e9eaeb"],[28,"#dfe0e1"],[29,"#bdc0ca"]],
  57: [[2,"#e9eaef"],[6,"#ecedf1"],[18,"#ecedf2"],[21,"#e9ebef"],[23,"#e9eaee"],[24,"#e9eaee"],[28,"#ecedf1"],[30,"#eff0f4"],[31,"#eff0f4"],[34,"#f0f1f5"],[35,"#e6e8ec"]],
};

let rects = "";
Object.keys(cells).forEach((k) => {
  cells[k].forEach(([col, colour]) => {
    rects += `<rect x="${3 + col * 16}" y="${35.5 + k * 16}" width="16" height="16" fill="${colour}" />`;
  });
});
document.querySelector(".mosaic").innerHTML = rects;
```
